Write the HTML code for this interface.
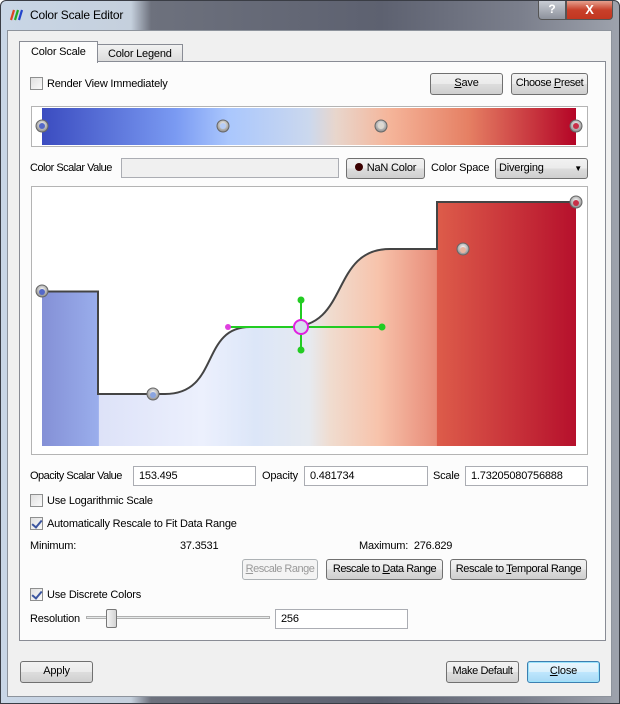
<!DOCTYPE html>
<html><head><style>
*{box-sizing:border-box}
body{margin:0;width:620px;height:704px;overflow:hidden;font-family:"Liberation Sans",sans-serif;font-size:11px;letter-spacing:-0.2px;color:#000;background:#fff;white-space:nowrap}
.win{position:absolute;left:0;top:0;width:620px;height:704px;border:1px solid #3a3d45;border-radius:6px 6px 0 0;background:linear-gradient(90deg,#c9d6e6 0,#c5d0dd 130px,#6d717d 150px,#5d6170 380px,#7b7f8c 520px,#9ea3ad 620px)}
.client{position:absolute;left:7px;top:30px;width:605px;height:667px;background:#f0f0f0;border:1px solid #8d939c}
.abs{position:absolute}
.btn{position:absolute;border:1px solid #707070;border-radius:3px;background:linear-gradient(#f2f2f2 0,#ebebeb 50%,#dddddd 51%,#cfcfcf 100%);text-align:center;line-height:19px;font-size:11px;overflow:hidden}
.inp{position:absolute;background:#fff;border:1px solid #abadb3;padding-left:5px;line-height:18px}
.cb{position:absolute;width:13px;height:13px;border:1px solid #8e8f8f;background:linear-gradient(135deg,#e0e0e0,#fafafa)}
.cb.on::after{content:"";position:absolute;left:3px;top:0px;width:4px;height:8px;border:solid #3b55a0;border-width:0 2px 2px 0;transform:rotate(40deg)}
u{text-decoration:underline}
</style></head><body>
<div class="win">
  <svg class="abs" style="left:7px;top:8px" width="16" height="12"><g stroke-width="2.2"><line x1="3" y1="11" x2="6" y2="1" stroke="#d42"/><line x1="7" y1="11" x2="10" y2="1" stroke="#2a2"/><line x1="11" y1="11" x2="14" y2="1" stroke="#24c"/></g></svg>
  <div class="abs" style="left:29px;top:7px;font-size:12px">Color Scale Editor</div>
  <div class="abs" style="left:537px;top:0;width:28px;height:19px;border:1px solid #555;border-top:none;border-radius:0 0 0 4px;background:linear-gradient(#c8ccd4,#8d929c);color:#fff;font-weight:bold;text-align:center;line-height:17px;font-size:12px">?</div>
  <div class="abs" style="left:565px;top:0;width:47px;height:19px;border:1px solid #555;border-top:none;border-radius:0 0 4px 0;background:linear-gradient(#e6a08e,#c8402a 50%,#c23720);color:#fff;font-weight:bold;text-align:center;line-height:17px;font-size:13px">X</div>
</div>
<div class="client"></div>
<div class="abs" style="left:19px;top:61px;width:587px;height:580px;background:#fcfcfc;border:1px solid #898c95"></div>
<div class="abs" style="left:19px;top:41px;width:79px;height:22px;background:#fcfcfc;border:1px solid #898c95;border-bottom:none;padding:4px 0 0 11px">Color Scale</div>
<div class="abs" style="left:97px;top:44px;width:86px;height:18px;background:linear-gradient(#f2f2f2,#dcdcdc);border:1px solid #898c95;padding:3px 0 0 10px">Color Legend</div>

<div class="cb" style="left:30px;top:77px"></div>
<div class="abs" style="left:47px;top:78px">Render View Immediately</div>
<div class="btn" style="left:430px;top:73px;width:73px;height:22px"><u>S</u>ave</div>
<div class="btn" style="left:511px;top:73px;width:77px;height:22px;letter-spacing:-0.4px">Choose <u>P</u>reset</div>

<div class="abs" style="left:31px;top:106px;width:557px;height:41px;border:1px solid #b4b4b4;background:#fff"></div>
<div class="abs" style="left:42px;top:108px;width:534px;height:37px;background:linear-gradient(90deg,#3b4cc0 0,#7a9af2 25%,#aac7fd 35%,#cbd8ee 50%,#e8d6cc 55%,#f5b59a 65%,#e57f63 80%,#b40426 100%)"></div>
<svg class="abs" style="left:0;top:0" width="620" height="704">
 <defs><radialGradient id="k" cx="50%" cy="40%" r="60%"><stop offset="0" stop-color="#fff"/><stop offset="1" stop-color="#888"/></radialGradient></defs>
 <g stroke="#666" stroke-width="1">
  <circle cx="42" cy="126" r="6" fill="url(#k)"/><circle cx="42" cy="126" r="3" fill="#5468c8" stroke="none"/>
  <circle cx="223" cy="126" r="6" fill="url(#k)"/><circle cx="223" cy="126" r="3" fill="#b6ccf6" stroke="none"/>
  <circle cx="381" cy="126" r="6" fill="url(#k)"/><circle cx="381" cy="126" r="3" fill="#ddd8d0" stroke="none"/>
  <circle cx="576" cy="126" r="6" fill="url(#k)"/><circle cx="576" cy="126" r="3" fill="#c83048" stroke="none"/>
 </g>
</svg>

<div class="abs" style="left:30px;top:162px;letter-spacing:-0.5px">Color Scalar Value</div>
<div class="inp" style="left:121px;top:158px;width:218px;height:20px;background:#f0f0f0"></div>
<div class="btn" style="left:346px;top:158px;width:79px;height:21px"><span style="display:inline-block;width:8px;height:8px;border-radius:50%;background:#3a0000;margin-right:4px"></span>NaN Color</div>
<div class="abs" style="left:431px;top:162px">Color Space</div>
<div class="btn" style="left:495px;top:158px;width:93px;height:21px;text-align:left;padding-left:3px">Diverging<span style="position:absolute;right:5px;top:0;font-size:8px">▼</span></div>

<div class="abs" style="left:31px;top:186px;width:557px;height:269px;border:1px solid #b4b4b4;background:#fff"></div>
<svg class="abs" style="left:0;top:0" width="620" height="704">
 <defs>
  <linearGradient id="f" x1="42" x2="576" y1="0" y2="0" gradientUnits="userSpaceOnUse">
   <stop offset="0" stop-color="#8490d6"/><stop offset="0.106" stop-color="#9aaeec"/>
   <stop offset="0.107" stop-color="#dde2f8"/><stop offset="0.3" stop-color="#ecf0fd"/>
   <stop offset="0.4" stop-color="#dce6f8"/><stop offset="0.5" stop-color="#e6eaf0"/>
   <stop offset="0.54" stop-color="#f0dccf"/><stop offset="0.63" stop-color="#f7c3ab"/>
   <stop offset="0.739" stop-color="#e88b78"/><stop offset="0.74" stop-color="#dd5c4a"/>
   <stop offset="1" stop-color="#b6102c"/>
  </linearGradient>
 </defs>
 <path d="M42,446 L42,291.5 L98,291.5 L98,394 L165,394 C220,394 200,327 250,327 L290,327 C350,327 330,249 390,249 L437,249 L437,202 L576,202 L576,446 Z" fill="url(#f)"/>
 <path d="M42,291.5 L98,291.5 L98,394 L165,394 C220,394 200,327 250,327 L290,327 C350,327 330,249 390,249 L437,249 L437,202 L576,202" fill="none" stroke="#444" stroke-width="2"/>
 <g stroke="#22cc22" stroke-width="2"><line x1="228" y1="327" x2="382" y2="327"/><line x1="301" y1="300" x2="301" y2="350"/></g>
 <g fill="#22cc22"><circle cx="301" cy="300" r="3.5"/><circle cx="301" cy="350" r="3.5"/><circle cx="382" cy="327" r="3.5"/><circle cx="228" cy="327" r="3" fill="#e040e0"/></g>
 <circle cx="301" cy="327" r="7" fill="#d6ddef" stroke="#e020e0" stroke-width="2"/>
 <g stroke="#666">
  <circle cx="42" cy="291" r="6" fill="url(#k)"/><circle cx="42" cy="292" r="3" fill="#5468c8" stroke="none"/>
  <circle cx="153" cy="394" r="6" fill="url(#k)"/><circle cx="153" cy="395" r="3" fill="#8aa4e0" stroke="none"/>
  <circle cx="463" cy="249" r="6" fill="url(#k)"/><circle cx="463" cy="250" r="3" fill="#e8b4a0" stroke="none"/>
  <circle cx="576" cy="202" r="6" fill="url(#k)"/><circle cx="576" cy="203" r="3" fill="#c83048" stroke="none"/>
 </g>
</svg>

<div class="abs" style="left:30px;top:470px;letter-spacing:-0.5px">Opacity Scalar Value</div>
<div class="inp" style="left:133px;top:466px;width:123px;height:20px">153.495</div>
<div class="abs" style="left:262px;top:470px">Opacity</div>
<div class="inp" style="left:304px;top:466px;width:124px;height:20px">0.481734</div>
<div class="abs" style="left:433px;top:470px">Scale</div>
<div class="inp" style="left:465px;top:466px;width:123px;height:20px">1.73205080756888</div>

<div class="cb" style="left:30px;top:494px"></div>
<div class="abs" style="left:47px;top:495px">Use Logarithmic Scale</div>
<div class="cb on" style="left:30px;top:517px"></div>
<div class="abs" style="left:47px;top:518px">Automatically Rescale to Fit Data Range</div>
<div class="abs" style="left:30px;top:540px">Minimum:</div>
<div class="abs" style="left:180px;top:540px">37.3531</div>
<div class="abs" style="left:359px;top:540px">Maximum:&nbsp;&nbsp;276.829</div>
<div class="btn" style="left:242px;top:559px;width:76px;height:21px;color:#999;border-color:#adb2b5;background:#f4f4f4;letter-spacing:-0.5px"><u>R</u>escale Range</div>
<div class="btn" style="left:326px;top:559px;width:117px;height:21px;letter-spacing:-0.5px">Rescale to <u>D</u>ata Range</div>
<div class="btn" style="left:450px;top:559px;width:137px;height:21px;letter-spacing:-0.4px">Rescale to <u>T</u>emporal Range</div>
<div class="cb on" style="left:30px;top:588px"></div>
<div class="abs" style="left:47px;top:589px">Use Discrete Colors</div>
<div class="abs" style="left:30px;top:613px">Resolution</div>
<div class="abs" style="left:86px;top:616px;width:184px;height:3px;border:1px solid #b0b0b0;background:#e7eaea"></div>
<div class="abs" style="left:106px;top:609px;width:11px;height:19px;border:1px solid #777;border-radius:2px;background:linear-gradient(90deg,#f4f4f4,#d4d4d4)"></div>
<div class="inp" style="left:275px;top:609px;width:133px;height:20px">256</div>

<div class="btn" style="left:20px;top:661px;width:73px;height:22px">Apply</div>
<div class="btn" style="left:446px;top:661px;width:73px;height:22px;letter-spacing:-0.4px">Make Default</div>
<div class="btn" style="left:527px;top:661px;width:73px;height:22px;border-color:#3c7fb1;background:linear-gradient(#eaf6fd,#d9f0fc 50%,#bee6fd 51%,#a7d9f5);box-shadow:inset 0 0 0 1px #9be3fb"><u>C</u>lose</div>
</body></html>
